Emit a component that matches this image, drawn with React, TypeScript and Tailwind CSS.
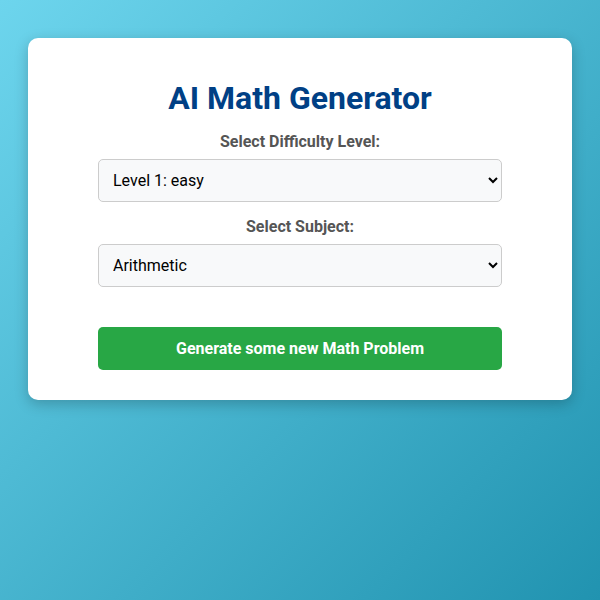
import { useState } from 'react';

export default function App() {
  const [level, setLevel] = useState('1');
  const [subject, setSubject] = useState('arithmetic');

  return (
    <div
      className="min-h-[600px] w-full bg-[linear-gradient(135deg,#6dd5ed,#2193b0)] px-[28px] pt-[38px]"
      style={{ fontFamily: 'Roboto, "Liberation Sans", sans-serif' }}
    >
      <div className="rounded-[10px] bg-white px-[70px] pt-[41px] pb-[30px] shadow-[0_4px_14px_rgba(0,0,0,0.22)]">
        <h1 className="text-center text-[32px] leading-[38px] font-bold text-[#004085]">
          AI Math Generator
        </h1>

        <label className="mt-[13px] block text-center text-[16px] leading-[24px] font-bold text-[#555]">
          Select Difficulty Level:
        </label>
        <select
          value={level}
          onChange={(e) => setLevel(e.target.value)}
          className="mt-[5px] block h-[43px] w-full rounded-[5px] border border-[#ccc] bg-[#f8f9fa] px-[10px] text-[16px] text-black"
        >
          <option value="1">Level 1: easy</option>
          <option value="2">Level 2: medium</option>
          <option value="3">Level 3: hard</option>
        </select>

        <label className="mt-[13px] block text-center text-[16px] leading-[24px] font-bold text-[#555]">
          Select Subject:
        </label>
        <select
          value={subject}
          onChange={(e) => setSubject(e.target.value)}
          className="mt-[5px] block h-[43px] w-full rounded-[5px] border border-[#ccc] bg-[#f8f9fa] px-[10px] text-[16px] text-black"
        >
          <option value="arithmetic">Arithmetic</option>
          <option value="algebra">Algebra</option>
          <option value="geometry">Geometry</option>
        </select>

        <button
          type="button"
          className="mt-[40px] block h-[43px] w-full rounded-[5px] bg-[#28a745] text-[16px] font-bold text-white"
        >
          Generate some new Math Problem
        </button>
      </div>
    </div>
  );
}
